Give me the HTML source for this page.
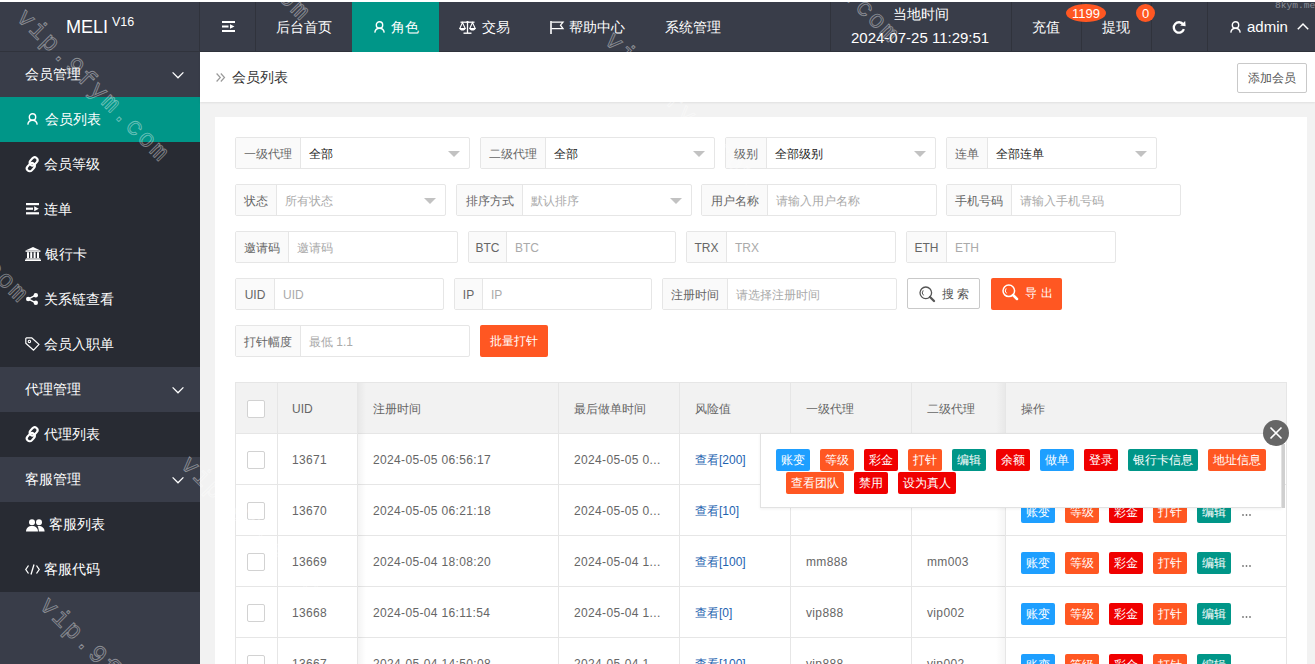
<!DOCTYPE html>
<html><head><meta charset="utf-8">
<style>
*{box-sizing:border-box;margin:0;padding:0}
html,body{width:1315px;height:664px;overflow:hidden;background:#fff}
body{font-family:"Liberation Sans",sans-serif;position:relative;color:#666}
.a{position:absolute}
svg{position:absolute;overflow:visible}
#hdr{left:0;top:2px;width:1315px;height:50px;background:#393D49;border-bottom:1px solid #30333c}
#side{left:0;top:52px;width:200px;height:612px;background:#393D49}
.grp{position:absolute;left:0;width:200px;height:45px;color:#fff;font-size:14px;line-height:45px;padding-left:25px;background:#393D49;font-weight:500}
.itm{position:absolute;left:0;width:200px;height:45px;color:#fff;font-size:14px;line-height:45px;background:#282B33;font-weight:500}
.itm span{position:absolute;top:0}
.itm.on{background:#009688}
.nav{position:absolute;top:0;height:50px;line-height:50px;color:#fff;font-size:14px;white-space:nowrap;font-weight:500}
.vl{position:absolute;top:0;width:1px;height:50px;background:#30333c}
#main{left:200px;top:52px;width:1115px;height:612px;background:#F2F2F2}
#bc{left:200px;top:52px;width:1115px;height:50px;background:#fff;box-shadow:0 1px 2px rgba(0,0,0,.08)}
#card{left:215px;top:117px;width:1092px;height:547px;background:#fff}
.fb{position:absolute;height:32px;border:1px solid #e6e6e6;border-radius:2px;background:#fff}
.fl{position:absolute;left:0;top:0;height:30px;line-height:32.5px;background:#FAFAFA;border-right:1px solid #e6e6e6;font-size:12px;color:#666;text-align:center}
.fi{position:absolute;top:0;height:30px;line-height:32.5px;font-size:12px;padding-left:8px;color:#aaa;white-space:nowrap}
.fi.v{color:#222}
.tri{position:absolute;top:13px;width:0;height:0;border-left:6px solid transparent;border-right:6px solid transparent;border-top:6px solid #c2c2c2}
.btn{position:absolute;height:32px;border-radius:2px;font-size:12px;line-height:32px;white-space:nowrap}
#tbl{left:235px;top:382px;width:1052px;height:282px;border:1px solid #e6e6e6;border-bottom:0;background:#fff;overflow:hidden}
.th{position:absolute;left:0;top:0;width:1052px;height:51px;background:#F2F2F2;border-bottom:1px solid #e6e6e6}
.tr{position:absolute;left:0;width:1052px;height:51px;border-bottom:1px solid #e6e6e6}
.cl{position:absolute;top:0;width:1px;height:282px;background:#e6e6e6}
.tx{position:absolute;font-size:12px;color:#666;white-space:nowrap;line-height:20px}
.num{letter-spacing:.35px}
.cb{position:absolute;width:18px;height:18px;border:1px solid #d2d2d2;border-radius:2px;background:#fff}
.xb{position:absolute;height:22px;line-height:22px;padding:0 5px;font-size:12px;color:#fff;border-radius:2px;white-space:nowrap}
.bl{background:#1E9FFF}.og{background:#FF5722}.rd{background:#F00000}.tl{background:#009688}
.lk{color:#1E63B0}
.bdg{position:absolute;height:18px;border-radius:50%;background:#FF5722;color:#fff;font-size:13px;line-height:20px;text-align:center}
.wm{position:absolute;font-family:"Liberation Mono",monospace;font-size:25px;line-height:1;color:transparent;-webkit-text-stroke:0.9px rgba(255,255,255,.42);white-space:pre;transform:rotate(45deg);transform-origin:0 0;letter-spacing:2.1px;pointer-events:none}
</style></head><body>
<div id="hdr" class="a">
<div class="nav" style="left:66px;font-size:19px;transform:scaleX(0.95);transform-origin:0 0">MELI</div>
<div class="nav" style="left:112px;top:-5px;font-size:12.5px;font-weight:normal">V16</div>
<div class="vl" style="left:199px"></div>
<div class="vl" style="left:255px"></div>
<svg style="left:222px;top:19px" width="13" height="12" viewBox="0 0 13 12" ><rect x="0" y="0" width="13" height="2" fill="#fff"/><rect x="0" y="4.5" width="6.5" height="2" fill="#fff"/><path d="M8 3.2L12.5 5.5L8 7.8Z" fill="#fff"/><rect x="0" y="9" width="13" height="2" fill="#fff"/></svg>
<div class="nav" style="left:276px">后台首页</div>
<div class="a" style="left:352px;top:0;width:87px;height:50px;background:#009688"></div>
<svg style="left:374px;top:18.5px" width="11" height="12" viewBox="0 0 11 12" ><circle cx="5.5" cy="3.9" r="3.2" fill="none" stroke="#fff" stroke-width="1.4"/><path d="M0.8 11.6C1.2 8.8 3.2 7.3 5.5 7.3C7.8 7.3 9.8 8.8 10.2 11.6" fill="none" stroke="#fff" stroke-width="1.4"/></svg>
<div class="nav" style="left:391px">角色</div>
<svg style="left:459px;top:18.5px" width="17" height="13" viewBox="0 0 17 13" ><path d="M1.5 1.2H15.5" stroke="#fff" stroke-width="1.3"/><path d="M8.5 0V12" stroke="#fff" stroke-width="1.3"/><path d="M4.5 12.2H12.5" stroke="#fff" stroke-width="1.4"/><circle cx="8.5" cy="1" r="1.1" fill="#fff"/><path d="M3.5 1.5L0.8 7.5H6.2Z" fill="none" stroke="#fff" stroke-width="1.1"/><path d="M0.5 7.5H6.5C6.3 9 5 9.6 3.5 9.6C2 9.6 0.7 9 0.5 7.5Z" fill="#fff"/><path d="M13.5 1.5L10.8 7.5H16.2Z" fill="none" stroke="#fff" stroke-width="1.1"/><path d="M10.5 7.5H16.5C16.3 9 15 9.6 13.5 9.6C12 9.6 10.7 9 10.5 7.5Z" fill="#fff"/></svg>
<div class="nav" style="left:482px">交易</div>
<svg style="left:550px;top:18.5px" width="14" height="13" viewBox="0 0 14 13" ><path d="M1 0V13" stroke="#fff" stroke-width="1.6"/><path d="M1.5 1.2H13L10.5 4.2L13 7.6H1.5" fill="none" stroke="#fff" stroke-width="1.3"/></svg>
<div class="nav" style="left:569px">帮助中心</div>
<div class="nav" style="left:665px">系统管理</div>
<div class="vl" style="left:830px"></div>
<div class="a" style="left:893px;top:2px;font-size:14px;color:#fff;line-height:20px;font-weight:500">当地时间</div>
<div class="a" style="left:851px;top:25.5px;font-size:15px;color:#fff;line-height:20px;letter-spacing:0px;white-space:nowrap">2024-07-25 11:29:51</div>
<div class="vl" style="left:1011px"></div>
<div class="vl" style="left:1081px"></div>
<div class="vl" style="left:1151px"></div>
<div class="vl" style="left:1207px"></div>
<div class="nav" style="left:1032px">充值</div>
<div class="nav" style="left:1102px">提现</div>
<div class="bdg" style="left:1066px;top:2px;width:40px">1199</div>
<div class="bdg" style="left:1136px;top:2px;width:19px">0</div>
<svg style="left:1172px;top:18.5px" width="14" height="13" viewBox="0 0 14 13" ><path d="M11.2 3.4A5.2 5.2 0 1 0 11.9 8.2" fill="none" stroke="#fff" stroke-width="2.3"/><path d="M8.2 4.6L13.6 5.2L13.2 0Z" fill="#fff"/></svg>
<svg style="left:1229.5px;top:18.5px" width="11" height="12" viewBox="0 0 11 12" ><circle cx="5.5" cy="3.9" r="3.2" fill="none" stroke="#fff" stroke-width="1.4"/><path d="M0.8 11.6C1.2 8.8 3.2 7.3 5.5 7.3C7.8 7.3 9.8 8.8 10.2 11.6" fill="none" stroke="#fff" stroke-width="1.4"/></svg>
<div class="nav" style="left:1247px;font-size:15px">admin</div>
<svg style="left:1297px;top:20.5px" width="12" height="7" viewBox="0 0 12 7" ><path d="M0.8 6.2L6 1L11.2 6.2" fill="none" stroke="#fff" stroke-width="1.5"/></svg>
</div>
<div id="side" class="a">
<div class="grp" style="top:0px">会员管理</div>
<svg style="left:172px;top:19.6px" width="12" height="6" viewBox="0 0 12 6" ><path d="M0.6 0.4L6 5.8L11.4 0.4" fill="none" stroke="#fff" stroke-width="1.3"/></svg>
<div class="itm on" style="top:45px"><span style="left:45px">会员列表</span></div>
<svg style="left:27px;top:60.5px" width="11" height="12" viewBox="0 0 11 12" ><circle cx="5.5" cy="3.9" r="3.2" fill="none" stroke="#fff" stroke-width="1.4"/><path d="M0.8 11.6C1.2 8.8 3.2 7.3 5.5 7.3C7.8 7.3 9.8 8.8 10.2 11.6" fill="none" stroke="#fff" stroke-width="1.4"/></svg>
<div class="itm" style="top:90px"><span style="left:44px">会员等级</span></div>
<svg style="left:25px;top:104.5px" width="15" height="15" viewBox="0 0 15 15" ><g transform="rotate(-48 7.3 7.3)"><rect x="-0.4" y="5.2" width="9" height="5.8" rx="2.9" fill="none" stroke="#fff" stroke-width="2.1"/><rect x="5.8" y="3.4" width="9" height="5.8" rx="2.9" fill="none" stroke="#fff" stroke-width="2.1"/></g></svg>
<div class="itm" style="top:135px"><span style="left:44px">连单</span></div>
<svg style="left:26px;top:151px" width="13" height="12" viewBox="0 0 13 12" ><rect x="0" y="0" width="13" height="2.2" fill="#fff"/><rect x="0" y="4.6" width="7" height="2.2" fill="#fff"/><path d="M8.2 3.2L12.8 5.7L8.2 8.2Z" fill="#fff"/><rect x="0" y="9.2" width="13" height="2.2" fill="#fff"/></svg>
<div class="itm" style="top:180px"><span style="left:45px">银行卡</span></div>
<svg style="left:25px;top:195px" width="16" height="14" viewBox="0 0 16 14" ><path d="M8 0L15.5 3.6H0.5Z" fill="#fff"/><rect x="0.5" y="3.6" width="15" height="1.2" fill="#fff"/><rect x="2" y="5.2" width="2" height="6" fill="#fff"/><rect x="5.2" y="5.2" width="2" height="6" fill="#fff"/><rect x="8.6" y="5.2" width="2" height="6" fill="#fff"/><rect x="12" y="5.2" width="2" height="6" fill="#fff"/><rect x="0.8" y="11.4" width="14.4" height="1.2" fill="#fff"/><rect x="0" y="12.6" width="16" height="1.4" fill="#fff"/></svg>
<div class="itm" style="top:225px"><span style="left:44px">关系链查看</span></div>
<svg style="left:26px;top:240.5px" width="12" height="12" viewBox="0 0 12 12" ><circle cx="9.8" cy="2.2" r="2.2" fill="#fff"/><circle cx="2.2" cy="6" r="2.2" fill="#fff"/><circle cx="9.8" cy="9.8" r="2.2" fill="#fff"/><path d="M9.8 2.2L2.2 6L9.8 9.8" fill="none" stroke="#fff" stroke-width="1.4"/></svg>
<div class="itm" style="top:270px"><span style="left:44px">会员入职单</span></div>
<svg style="left:25px;top:284.5px" width="15" height="14" viewBox="0 0 15 14" ><path d="M0.8 1.5V6.2L8.6 13.2L14 7.4L6.6 0.8H1.5Z" fill="none" stroke="#fff" stroke-width="1.2" stroke-linejoin="round"/><circle cx="4.4" cy="4.4" r="1.2" fill="none" stroke="#fff" stroke-width="1.1"/></svg>
<div class="grp" style="top:315px">代理管理</div>
<svg style="left:172px;top:334.6px" width="12" height="6" viewBox="0 0 12 6" ><path d="M0.6 0.4L6 5.8L11.4 0.4" fill="none" stroke="#fff" stroke-width="1.3"/></svg>
<div class="itm" style="top:360px"><span style="left:44px">代理列表</span></div>
<svg style="left:25px;top:374.5px" width="15" height="15" viewBox="0 0 15 15" ><g transform="rotate(-48 7.3 7.3)"><rect x="-0.4" y="5.2" width="9" height="5.8" rx="2.9" fill="none" stroke="#fff" stroke-width="2.1"/><rect x="5.8" y="3.4" width="9" height="5.8" rx="2.9" fill="none" stroke="#fff" stroke-width="2.1"/></g></svg>
<div class="grp" style="top:405px">客服管理</div>
<svg style="left:172px;top:424.6px" width="12" height="6" viewBox="0 0 12 6" ><path d="M0.6 0.4L6 5.8L11.4 0.4" fill="none" stroke="#fff" stroke-width="1.3"/></svg>
<div class="itm" style="top:450px"><span style="left:49px">客服列表</span></div>
<svg style="left:25.5px;top:467px" width="19" height="13" viewBox="0 0 19 13" ><circle cx="6" cy="3.2" r="3" fill="#fff"/><path d="M0 12.6C0 9 2.5 7 6 7C9.5 7 12 9 12 12.6Z" fill="#fff"/><circle cx="13" cy="3.2" r="3" fill="#fff"/><path d="M11.5 7.2C15 6.6 18.6 8.4 18.6 12.6H12.8C12.8 10.4 12.4 8.6 11.5 7.2Z" fill="#fff"/></svg>
<div class="itm" style="top:495px"><span style="left:44px">客服代码</span></div>
<svg style="left:24.5px;top:511.5px" width="15" height="11" viewBox="0 0 15 11" ><path d="M3.5 1.5L0.8 5.5L3.5 9.5" fill="none" stroke="#fff" stroke-width="1.3"/><path d="M11.5 1.5L14.2 5.5L11.5 9.5" fill="none" stroke="#fff" stroke-width="1.3"/><path d="M9 0.5L6 10.5" stroke="#fff" stroke-width="1.3"/></svg>
</div>
<div id="main" class="a"></div>
<div id="bc" class="a"></div>
<svg style="left:216px;top:73px" width="10" height="9" viewBox="0 0 10 9" ><path d="M0.6 0.5L4.3 4.5L0.6 8.5M4.8 0.5L8.5 4.5L4.8 8.5" fill="none" stroke="#999" stroke-width="1.2"/></svg>
<div class="a" style="left:232px;top:52px;height:50px;line-height:50px;font-size:14px;color:#333">会员列表</div>
<div class="a" style="left:1237px;top:63px;width:70px;height:30px;border:1px solid #C9C9C9;border-radius:2px;background:#fff;font-size:12px;line-height:28px;text-align:center;color:#555">添加会员</div>
<div id="card" class="a"></div>
<div class="fb" style="left:235px;top:137px;width:235px"><div class="fl" style="width:65px">一级代理</div><div class="fi v" style="left:65px">全部</div><div class="tri" style="left:212px"></div></div>
<div class="fb" style="left:480px;top:137px;width:235px"><div class="fl" style="width:65px">二级代理</div><div class="fi v" style="left:65px">全部</div><div class="tri" style="left:212px"></div></div>
<div class="fb" style="left:725px;top:137px;width:211px"><div class="fl" style="width:41px">级别</div><div class="fi v" style="left:41px">全部级别</div><div class="tri" style="left:188px"></div></div>
<div class="fb" style="left:946px;top:137px;width:211px"><div class="fl" style="width:41px">连单</div><div class="fi v" style="left:41px">全部连单</div><div class="tri" style="left:188px"></div></div>
<div class="fb" style="left:235px;top:184px;width:211px"><div class="fl" style="width:41px">状态</div><div class="fi" style="left:41px">所有状态</div><div class="tri" style="left:188px"></div></div>
<div class="fb" style="left:456px;top:184px;width:236px"><div class="fl" style="width:66px">排序方式</div><div class="fi" style="left:66px">默认排序</div><div class="tri" style="left:213px"></div></div>
<div class="fb" style="left:701px;top:184px;width:236px"><div class="fl" style="width:66px">用户名称</div><div class="fi" style="left:66px">请输入用户名称</div></div>
<div class="fb" style="left:946px;top:184px;width:235px"><div class="fl" style="width:65px">手机号码</div><div class="fi" style="left:65px">请输入手机号码</div></div>
<div class="fb" style="left:235px;top:231px;width:223px"><div class="fl" style="width:53px">邀请码</div><div class="fi" style="left:53px">邀请码</div></div>
<div class="fb" style="left:468px;top:231px;width:208px"><div class="fl" style="width:38px">BTC</div><div class="fi" style="left:38px">BTC</div></div>
<div class="fb" style="left:686px;top:231px;width:210px"><div class="fl" style="width:40px">TRX</div><div class="fi" style="left:40px">TRX</div></div>
<div class="fb" style="left:906px;top:231px;width:210px"><div class="fl" style="width:40px">ETH</div><div class="fi" style="left:40px">ETH</div></div>
<div class="fb" style="left:235px;top:278px;width:209px"><div class="fl" style="width:39px">UID</div><div class="fi" style="left:39px">UID</div></div>
<div class="fb" style="left:454px;top:278px;width:198px"><div class="fl" style="width:28px">IP</div><div class="fi" style="left:28px">IP</div></div>
<div class="fb" style="left:662px;top:278px;width:235px"><div class="fl" style="width:65px">注册时间</div><div class="fi" style="left:65px">请选择注册时间</div></div>
<div class="fb" style="left:235px;top:325px;width:235px"><div class="fl" style="width:65px">打针幅度</div><div class="fi" style="left:65px">最低 1.1</div></div>
<div class="btn" style="left:907px;top:278px;width:73px;height:31px;border:1px solid #C9C9C9;background:#fff"></div>
<svg style="left:919px;top:286px" width="16" height="16" viewBox="0 0 16 16" ><circle cx="6.8" cy="6.8" r="5.8" fill="none" stroke="#555" stroke-width="1.3"/><path d="M4.2 4.4A3.6 3.6 0 0 0 4.6 9.4" fill="none" stroke="#555" stroke-width="1"/><path d="M11 11L15 15" stroke="#555" stroke-width="2.3" stroke-linecap="round"/></svg>
<div class="a" style="left:942px;top:284px;font-size:12px;line-height:20px;color:#555;letter-spacing:3px">搜索</div>
<div class="btn" style="left:991px;top:278px;width:71px;background:#FF5722"></div>
<svg style="left:1002px;top:284px" width="16" height="16" viewBox="0 0 16 16" ><circle cx="6.8" cy="6.8" r="5.8" fill="none" stroke="#fff" stroke-width="1.5"/><path d="M4.2 4.4A3.6 3.6 0 0 0 4.6 9.4" fill="none" stroke="#fff" stroke-width="1"/><path d="M11 11L15 15" stroke="#fff" stroke-width="2.5" stroke-linecap="round"/></svg>
<div class="a" style="left:1025px;top:283px;font-size:12px;line-height:20px;color:#fff;letter-spacing:4px">导出</div>
<div class="btn" style="left:480px;top:325px;width:68px;background:#FF5722;color:#fff;text-align:center">批量打针</div>
<div id="tbl" class="a"><div class="th"></div>
<div class="tr" style="top:51px"></div>
<div class="tr" style="top:102px"></div>
<div class="tr" style="top:153px"></div>
<div class="tr" style="top:204px"></div>
<div class="tr" style="top:255px"></div>
<div class="cl" style="left:41px"></div>
<div class="cl" style="left:121px"></div>
<div class="cl" style="left:322px"></div>
<div class="cl" style="left:443px"></div>
<div class="cl" style="left:554px"></div>
<div class="cl" style="left:675px"></div>
<div class="cl" style="left:769px"></div>
<div class="a" style="left:122px;top:0;width:8px;height:282px;background:linear-gradient(to right,rgba(0,0,0,.045),rgba(0,0,0,0))"></div>
<div class="a" style="left:760px;top:0;width:9px;height:282px;background:linear-gradient(to left,rgba(0,0,0,.04),rgba(0,0,0,0))"></div>
</div>
<div class="tx" style="left:292px;top:399px">UID</div>
<div class="tx" style="left:373px;top:399px">注册时间</div>
<div class="tx" style="left:574px;top:399px">最后做单时间</div>
<div class="tx" style="left:695px;top:399px">风险值</div>
<div class="tx" style="left:806px;top:399px">一级代理</div>
<div class="tx" style="left:927px;top:399px">二级代理</div>
<div class="tx" style="left:1021px;top:399px">操作</div>
<div class="cb" style="left:247px;top:400px"></div>
<div class="cb" style="left:247px;top:451px"></div>
<div class="tx num" style="left:292px;top:450px">13671</div>
<div class="tx num" style="left:373px;top:450px">2024-05-05 06:56:17</div>
<div class="tx num" style="left:574px;top:450px">2024-05-05 0...</div>
<div class="tx lk" style="left:695px;top:450px">查看[200]</div>
<div class="xb bl" style="left:1021px;top:450px;width:34px">账变</div>
<div class="xb og" style="left:1065px;top:450px;width:34px">等级</div>
<div class="xb rd" style="left:1109px;top:450px;width:34px">彩金</div>
<div class="xb og" style="left:1153px;top:450px;width:34px">打针</div>
<div class="xb tl" style="left:1197px;top:450px;width:34px">编辑</div>
<svg style="left:1242px;top:463px" width="9" height="2" viewBox="0 0 9 2" ><circle cx="1" cy="1" r="0.9" fill="#777"/><circle cx="4.5" cy="1" r="0.9" fill="#777"/><circle cx="8" cy="1" r="0.9" fill="#777"/></svg>
<div class="cb" style="left:247px;top:502px"></div>
<div class="tx num" style="left:292px;top:501px">13670</div>
<div class="tx num" style="left:373px;top:501px">2024-05-05 06:21:18</div>
<div class="tx num" style="left:574px;top:501px">2024-05-05 0...</div>
<div class="tx lk" style="left:695px;top:501px">查看[10]</div>
<div class="xb bl" style="left:1021px;top:501px;width:34px">账变</div>
<div class="xb og" style="left:1065px;top:501px;width:34px">等级</div>
<div class="xb rd" style="left:1109px;top:501px;width:34px">彩金</div>
<div class="xb og" style="left:1153px;top:501px;width:34px">打针</div>
<div class="xb tl" style="left:1197px;top:501px;width:34px">编辑</div>
<svg style="left:1242px;top:514px" width="9" height="2" viewBox="0 0 9 2" ><circle cx="1" cy="1" r="0.9" fill="#777"/><circle cx="4.5" cy="1" r="0.9" fill="#777"/><circle cx="8" cy="1" r="0.9" fill="#777"/></svg>
<div class="cb" style="left:247px;top:553px"></div>
<div class="tx num" style="left:292px;top:552px">13669</div>
<div class="tx num" style="left:373px;top:552px">2024-05-04 18:08:20</div>
<div class="tx num" style="left:574px;top:552px">2024-05-04 1...</div>
<div class="tx lk" style="left:695px;top:552px">查看[100]</div>
<div class="tx num" style="left:806px;top:552px">mm888</div>
<div class="tx num" style="left:927px;top:552px">mm003</div>
<div class="xb bl" style="left:1021px;top:552px;width:34px">账变</div>
<div class="xb og" style="left:1065px;top:552px;width:34px">等级</div>
<div class="xb rd" style="left:1109px;top:552px;width:34px">彩金</div>
<div class="xb og" style="left:1153px;top:552px;width:34px">打针</div>
<div class="xb tl" style="left:1197px;top:552px;width:34px">编辑</div>
<svg style="left:1242px;top:565px" width="9" height="2" viewBox="0 0 9 2" ><circle cx="1" cy="1" r="0.9" fill="#777"/><circle cx="4.5" cy="1" r="0.9" fill="#777"/><circle cx="8" cy="1" r="0.9" fill="#777"/></svg>
<div class="cb" style="left:247px;top:604px"></div>
<div class="tx num" style="left:292px;top:603px">13668</div>
<div class="tx num" style="left:373px;top:603px">2024-05-04 16:11:54</div>
<div class="tx num" style="left:574px;top:603px">2024-05-04 1...</div>
<div class="tx lk" style="left:695px;top:603px">查看[0]</div>
<div class="tx num" style="left:806px;top:603px">vip888</div>
<div class="tx num" style="left:927px;top:603px">vip002</div>
<div class="xb bl" style="left:1021px;top:603px;width:34px">账变</div>
<div class="xb og" style="left:1065px;top:603px;width:34px">等级</div>
<div class="xb rd" style="left:1109px;top:603px;width:34px">彩金</div>
<div class="xb og" style="left:1153px;top:603px;width:34px">打针</div>
<div class="xb tl" style="left:1197px;top:603px;width:34px">编辑</div>
<svg style="left:1242px;top:616px" width="9" height="2" viewBox="0 0 9 2" ><circle cx="1" cy="1" r="0.9" fill="#777"/><circle cx="4.5" cy="1" r="0.9" fill="#777"/><circle cx="8" cy="1" r="0.9" fill="#777"/></svg>
<div class="cb" style="left:247px;top:655px"></div>
<div class="tx num" style="left:292px;top:654px">13667</div>
<div class="tx num" style="left:373px;top:654px">2024-05-04 14:50:08</div>
<div class="tx num" style="left:574px;top:654px">2024-05-04 1...</div>
<div class="tx lk" style="left:695px;top:654px">查看[100]</div>
<div class="tx num" style="left:806px;top:654px">vip888</div>
<div class="tx num" style="left:927px;top:654px">vip002</div>
<div class="xb bl" style="left:1021px;top:654px;width:34px">账变</div>
<div class="xb og" style="left:1065px;top:654px;width:34px">等级</div>
<div class="xb rd" style="left:1109px;top:654px;width:34px">彩金</div>
<div class="xb og" style="left:1153px;top:654px;width:34px">打针</div>
<div class="xb tl" style="left:1197px;top:654px;width:34px">编辑</div>
<svg style="left:1242px;top:667px" width="9" height="2" viewBox="0 0 9 2" ><circle cx="1" cy="1" r="0.9" fill="#777"/><circle cx="4.5" cy="1" r="0.9" fill="#777"/><circle cx="8" cy="1" r="0.9" fill="#777"/></svg>
<div class="a" style="left:760px;top:433px;width:522px;height:75px;background:#fff;border:1px solid #e2e2e2;box-shadow:0 1px 3px rgba(0,0,0,.06)"></div>
<div class="a" style="left:1282px;top:444px;width:3px;height:64px;background:#d0d0d0"></div>
<div class="xb bl" style="left:776px;top:449px;width:34px">账变</div>
<div class="xb og" style="left:820px;top:449px;width:34px">等级</div>
<div class="xb rd" style="left:864px;top:449px;width:34px">彩金</div>
<div class="xb og" style="left:908px;top:449px;width:34px">打针</div>
<div class="xb tl" style="left:952px;top:449px;width:34px">编辑</div>
<div class="xb rd" style="left:996px;top:449px;width:34px">余额</div>
<div class="xb bl" style="left:1040px;top:449px;width:34px">做单</div>
<div class="xb rd" style="left:1084px;top:449px;width:34px">登录</div>
<div class="xb tl" style="left:1128px;top:449px;width:70px">银行卡信息</div>
<div class="xb og" style="left:1208px;top:449px;width:58px">地址信息</div>
<div class="xb og" style="left:786px;top:472px;width:58px">查看团队</div>
<div class="xb rd" style="left:854px;top:472px;width:34px">禁用</div>
<div class="xb rd" style="left:898px;top:472px;width:58px">设为真人</div>
<div class="a" style="left:1263px;top:420px;width:26px;height:26px;border-radius:50%;background:#666"></div>
<svg style="left:1263px;top:420px" width="26" height="26" viewBox="0 0 26 26" ><path d="M7.5 7.5L18.5 18.5M18.5 7.5L7.5 18.5" stroke="#fff" stroke-width="1.6"/></svg>
<div class="wm" style="left:29.0px;top:5.0px">vip.9fym.com</div>
<div class="wm" style="left:170.4px;top:-136.4px">vip.9fym.com</div>
<div class="wm" style="left:758.7px;top:-113.7px">vip.9fym.com</div>
<div class="wm" style="left:617.3px;top:27.7px">vip.9fym.com</div>
<div class="wm" style="left:-112.4px;top:146.4px">vip.9fym.com</div>
<div class="wm" style="left:193.1px;top:451.9px">vip.9fym.com</div>
<div class="wm" style="left:51.7px;top:593.3px">vip.9fym.com</div>
<div class="a" style="left:1275px;top:0px;font-family:'Liberation Mono',monospace;font-size:9.6px;line-height:12px;color:#8a8d96;white-space:pre">8kym.me</div>
</body></html>
